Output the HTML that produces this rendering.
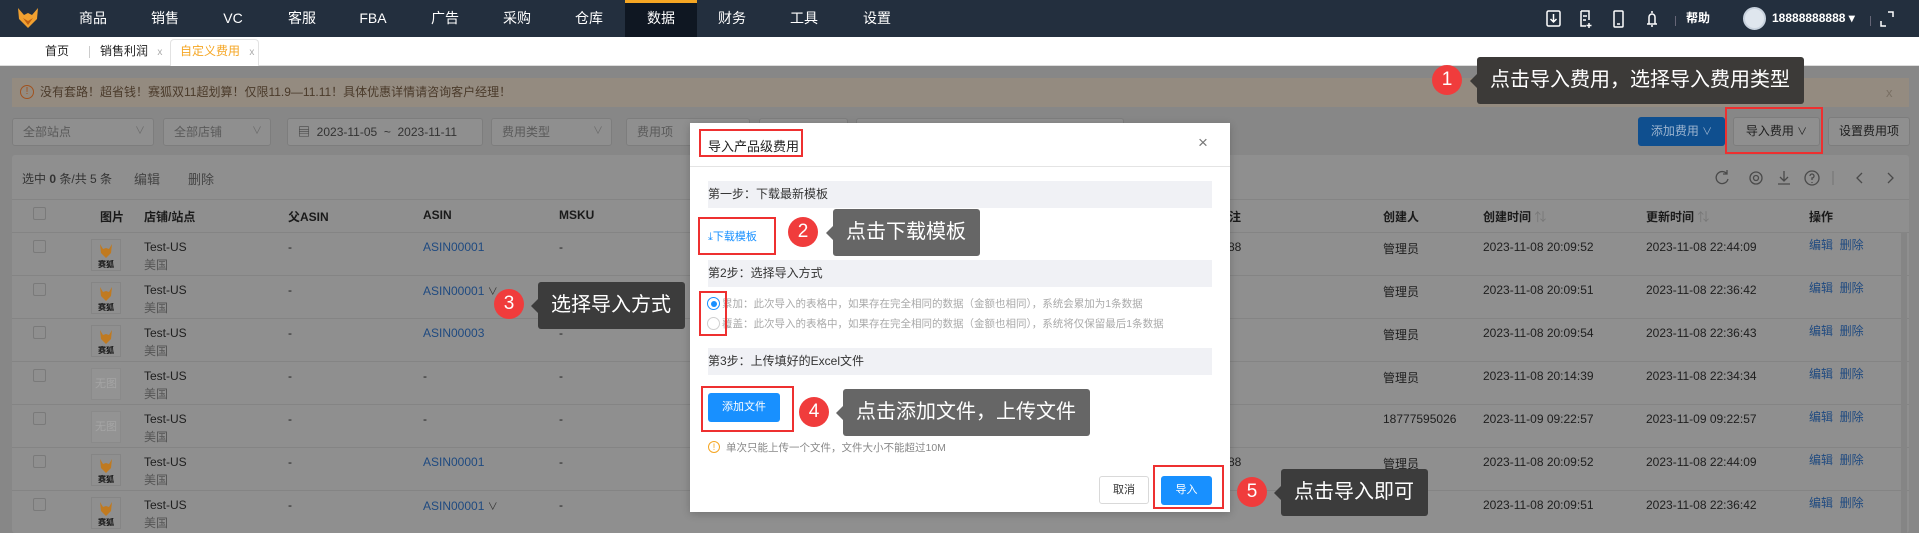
<!DOCTYPE html>
<html><head><meta charset="utf-8">
<style>
*{margin:0;padding:0;box-sizing:border-box}
body{width:1919px;height:533px;overflow:hidden;position:relative;background:#878787;font-family:"Liberation Sans","Noto Sans CJK SC",sans-serif;font-size:12px;color:#1e1e1e}
.a{position:absolute;white-space:nowrap}
.nav{left:0;top:0;width:1919px;height:37px;background:#232f3e}
.ni{top:0;height:37px;line-height:37px;color:#fff;font-size:14px;transform:translateX(-50%)}
.tabs{left:0;top:37px;width:1919px;height:29px;background:#fff;border-bottom:1px solid #ddd}
.inp{top:118px;height:28px;border:1px solid #7d7d7d;border-radius:3px;background:#8f8f8f;color:#5a5a5a;line-height:26px;padding-left:10px;font-size:12px}
.card{background:#8f8f8f}
.row{left:12px;width:1897px;height:43px;border-top:1px solid #848484}
.row .a{top:7px}
.row .l2{top:23px;color:#555}
.img{left:79px;top:6px!important;width:30px;height:32px;border:1px solid #858585;background:#8f8f8f}
.lk{color:#1f4a80}
.circ{width:30px;height:30px;border-radius:50%;background:#f03c3c;color:#fff;font-size:19px;text-align:center;line-height:30px}
.tip{height:47px;border-radius:3px;color:#fff;font-size:20px;line-height:47px;padding-left:13px}
.tip:before{content:"";position:absolute;left:-7px;top:17px;border-style:solid;border-width:7px 7px 7px 0;border-color:transparent;border-right-color:inherit}
.rb{border:2px solid #ee3030}
.band{left:18px;width:504px;height:27px;background:#f0f1f5;line-height:27px;padding-left:0;font-size:12px;color:#333}
</style></head><body>

<div class="a nav"></div>
<svg class="a" style="left:17px;top:7px" width="22" height="22" viewBox="0 0 22 22"><path d="M1 1 L7 8 L11 6 L15 8 L21 1 L20 12 L11 21 L2 12Z" fill="#f0a030"/><path d="M6 11 L11 18 L16 11 L11 14Z" fill="#c06010"/></svg>
<div class="a" style="left:625px;top:0;width:72px;height:37px;background:#0f1722;border-top:3px solid #f5a623"></div>
<div class="a ni" style="left:93px">商品</div>
<div class="a ni" style="left:165px">销售</div>
<div class="a ni" style="left:233px">VC</div>
<div class="a ni" style="left:302px">客服</div>
<div class="a ni" style="left:373px">FBA</div>
<div class="a ni" style="left:445px">广告</div>
<div class="a ni" style="left:517px">采购</div>
<div class="a ni" style="left:589px">仓库</div>
<div class="a ni" style="left:661px">数据</div>
<div class="a ni" style="left:732px">财务</div>
<div class="a ni" style="left:804px">工具</div>
<div class="a ni" style="left:877px">设置</div>
<svg class="a" style="left:1545px;top:9px" width="120" height="20" viewBox="0 0 120 20" fill="none" stroke="#fff" stroke-width="1.5"><rect x="2" y="2" width="13" height="15" rx="1.5"/><path d="M8.5 5v8M5.5 10l3 3 3-3"/><path d="M36 2h8v9M36 2v15h5M38 7h4M38 11h3M44 14v5M41.5 16.5h5"/><rect x="69" y="2" width="9" height="16" rx="1"/><path d="M72 15h3"/><path d="M102 15h10M104 15V8a3 3 0 0 1 6 0v7M107 2v2M106 17h2"/></svg>
<div class="a" style="left:1675px;top:16px;width:1px;height:10px;background:#667"></div>
<div class="a" style="left:1686px;top:0;line-height:37px;color:#fff;font-size:12px;font-weight:bold">帮助</div>
<div class="a" style="left:1743px;top:7px;width:23px;height:23px;border-radius:50%;background:#dfe6ee;border:2px solid #c8d2de"></div>
<div class="a" style="left:1772px;top:0;line-height:37px;color:#fff;font-size:12px;font-weight:bold">18888888888 ▾</div>
<div class="a" style="left:1870px;top:16px;width:1px;height:10px;background:#667"></div>
<svg class="a" style="left:1880px;top:11px" width="14" height="16" viewBox="0 0 14 16" fill="none" stroke="#fff" stroke-width="1.5"><path d="M8 1h5v5M1 10v5h5"/></svg>

<div class="a tabs"></div>
<div class="a" style="left:45px;top:37px;line-height:29px;font-size:12px;color:#222">首页</div>
<div class="a" style="left:89px;top:46px;width:1px;height:12px;background:#ccc"></div>
<div class="a" style="left:100px;top:37px;line-height:29px;font-size:12px;color:#222">销售利润 <span style="color:#aaa;font-size:10px;margin-left:6px">x</span></div>
<div class="a" style="left:170px;top:39px;width:89px;height:27px;border:1px solid #e2e2e2;border-bottom:none;border-radius:4px 4px 0 0;background:#fff"></div>
<div class="a" style="left:180px;top:37px;line-height:29px;font-size:12px;color:#f5a623">自定义费用 <span style="color:#aaa;font-size:10px;margin-left:6px">x</span></div>

<div class="a" style="left:12px;top:78px;width:1897px;height:29px;background:#948b80"></div>
<div class="a" style="left:20px;top:85px;width:14px;height:14px;border:1px solid #a0521f;border-radius:50%;color:#a0521f;font-size:10px;line-height:12px;text-align:center">!</div>
<div class="a" style="left:40px;top:78px;line-height:29px;color:#4a3a2a;font-size:12px">没有套路！超省钱！赛狐双11超划算！仅限11.9—11.11！具体优惠详情请咨询客户经理！</div>
<div class="a" style="left:1886px;top:78px;line-height:29px;color:#7a7064;font-size:13px">x</div>

<div class="a inp" style="left:12px;width:142px">全部站点<span style="position:absolute;right:8px;color:#6a6a6a;font-size:10px">∨</span></div>
<div class="a inp" style="left:163px;width:108px">全部店铺<span style="position:absolute;right:8px;color:#6a6a6a;font-size:10px">∨</span></div>
<div class="a inp" style="left:287px;width:196px;color:#333">▤ &nbsp;2023-11-05 &nbsp;~ &nbsp;2023-11-11</div>
<div class="a inp" style="left:491px;width:121px">费用类型<span style="position:absolute;right:8px;color:#6a6a6a;font-size:10px">∨</span></div>
<div class="a inp" style="left:626px;width:124px">费用项</div>
<div class="a inp" style="left:759px;width:89px"></div>
<div class="a inp" style="left:856px;width:268px"></div>
<div class="a" style="left:1638px;top:117px;width:87px;height:29px;background:#0f4f8f;border-radius:3px;color:#9db5d0;line-height:29px;text-align:center;font-size:12px">添加费用 <span style="font-size:10px">∨</span></div>
<div class="a" style="left:1733px;top:117px;width:87px;height:29px;background:#8f8f8f;border:1px solid #7d7d7d;border-radius:3px;color:#1e1e1e;line-height:27px;text-align:center;font-size:12px">导入费用 <span style="font-size:10px">∨</span></div>
<div class="a" style="left:1828px;top:117px;width:82px;height:29px;background:#8f8f8f;border:1px solid #7d7d7d;border-radius:3px;color:#1e1e1e;line-height:27px;text-align:center;font-size:12px">设置费用项</div>

<div class="a card" style="left:12px;top:155px;width:1897px;height:378px;border-radius:3px"></div>
<div class="a" style="left:22px;top:170px;font-size:12px;color:#333">选中 <b>0</b> 条/共 5 条</div>
<div class="a" style="left:134px;top:169px;font-size:13px;color:#444">编辑</div>
<div class="a" style="left:188px;top:169px;font-size:13px;color:#444">删除</div>
<svg class="a" style="left:1713px;top:168px" width="190" height="20" viewBox="0 0 190 20" fill="none" stroke="#4a4a4a" stroke-width="1.3"><path d="M14 6a6 6 0 1 0 1 5M14 2v4h-4"/><circle cx="43" cy="10" r="6"/><circle cx="43" cy="10" r="2.5"/><path d="M71 3v10M67 9l4 4 4-4M65 16h12"/><circle cx="99" cy="10" r="7"/><path d="M97 8a2 2 0 1 1 2 2v2M99 14v1"/><path d="M120 3v14" stroke="#7a7a7a"/><path d="M149 5l-5 5 5 5M175 5l5 5-5 5"/></svg>
<div class="a" style="left:12px;top:199px;width:1897px;height:1px;background:#848484"></div>

<div class="a" style="left:33px;top:207px;width:13px;height:13px;border:1px solid #7a7a7a;border-radius:2px"></div>
<div class="a" style="left:100px;top:208px;font-weight:bold;color:#1a1a1a">图片</div>
<div class="a" style="left:144px;top:208px;font-weight:bold;color:#1a1a1a">店铺/站点</div>
<div class="a" style="left:288px;top:208px;font-weight:bold;color:#1a1a1a">父ASIN</div>
<div class="a" style="left:423px;top:208px;font-weight:bold;color:#1a1a1a">ASIN</div>
<div class="a" style="left:559px;top:208px;font-weight:bold;color:#1a1a1a">MSKU</div>
<div class="a" style="left:1229px;top:208px;font-weight:bold;color:#1a1a1a">注</div>
<div class="a" style="left:1383px;top:208px;font-weight:bold;color:#1a1a1a">创建人</div>
<div class="a" style="left:1483px;top:208px;font-weight:bold;color:#1a1a1a">创建时间 <span style="color:#777;font-weight:normal">⇅</span></div>
<div class="a" style="left:1646px;top:208px;font-weight:bold;color:#1a1a1a">更新时间 <span style="color:#777;font-weight:normal">⇅</span></div>
<div class="a" style="left:1809px;top:208px;font-weight:bold;color:#1a1a1a">操作</div>

<div class="a row" style="top:232px"><div class="a" style="left:21px;width:13px;height:13px;border:1px solid #7a7a7a;border-radius:2px"></div><div class="a img"><svg width="28" height="30" viewBox="0 0 28 30"><path d="M8 4l3 5 3-1 3 1 3-5-1 9-5 5-5-5z" fill="#c07a20"/><text x="14" y="27" font-size="8" text-anchor="middle" fill="#111" font-weight="bold">赛狐</text></svg></div><div class="a" style="left:132px">Test-US</div><div class="a l2" style="left:132px">美国</div><div class="a" style="left:276px">-</div><div class="a lk" style="left:411px">ASIN00001</div><div class="a" style="left:547px">-</div><div class="a" style="left:1216px">88</div><div class="a" style="left:1371px">管理员</div><div class="a" style="left:1471px">2023-11-08 20:09:52</div><div class="a" style="left:1634px">2023-11-08 22:44:09</div><div class="a lk" style="left:1797px;top:3px">编辑 &nbsp;删除</div></div>
<div class="a row" style="top:275px"><div class="a" style="left:21px;width:13px;height:13px;border:1px solid #7a7a7a;border-radius:2px"></div><div class="a img"><svg width="28" height="30" viewBox="0 0 28 30"><path d="M8 4l3 5 3-1 3 1 3-5-1 9-5 5-5-5z" fill="#c07a20"/><text x="14" y="27" font-size="8" text-anchor="middle" fill="#111" font-weight="bold">赛狐</text></svg></div><div class="a" style="left:132px">Test-US</div><div class="a l2" style="left:132px">美国</div><div class="a" style="left:276px">-</div><div class="a lk" style="left:411px">ASIN00001 <span style="color:#333;font-size:10px">∨</span></div><div class="a" style="left:547px">-</div><div class="a" style="left:1371px">管理员</div><div class="a" style="left:1471px">2023-11-08 20:09:51</div><div class="a" style="left:1634px">2023-11-08 22:36:42</div><div class="a lk" style="left:1797px;top:3px">编辑 &nbsp;删除</div></div>
<div class="a row" style="top:318px"><div class="a" style="left:21px;width:13px;height:13px;border:1px solid #7a7a7a;border-radius:2px"></div><div class="a img"><svg width="28" height="30" viewBox="0 0 28 30"><path d="M8 4l3 5 3-1 3 1 3-5-1 9-5 5-5-5z" fill="#c07a20"/><text x="14" y="27" font-size="8" text-anchor="middle" fill="#111" font-weight="bold">赛狐</text></svg></div><div class="a" style="left:132px">Test-US</div><div class="a l2" style="left:132px">美国</div><div class="a" style="left:276px">-</div><div class="a lk" style="left:411px">ASIN00003</div><div class="a" style="left:547px">-</div><div class="a" style="left:1371px">管理员</div><div class="a" style="left:1471px">2023-11-08 20:09:54</div><div class="a" style="left:1634px">2023-11-08 22:36:43</div><div class="a lk" style="left:1797px;top:3px">编辑 &nbsp;删除</div></div>
<div class="a row" style="top:361px"><div class="a" style="left:21px;width:13px;height:13px;border:1px solid #7a7a7a;border-radius:2px"></div><div class="a img" style="background:#939393;border-color:#8a8a8a;color:#a5a5a5;font-size:11px;line-height:30px;text-align:center">无图</div><div class="a" style="left:132px">Test-US</div><div class="a l2" style="left:132px">美国</div><div class="a" style="left:276px">-</div><div class="a" style="left:411px">-</div><div class="a" style="left:547px">-</div><div class="a" style="left:1371px">管理员</div><div class="a" style="left:1471px">2023-11-08 20:14:39</div><div class="a" style="left:1634px">2023-11-08 22:34:34</div><div class="a lk" style="left:1797px;top:3px">编辑 &nbsp;删除</div></div>
<div class="a row" style="top:404px"><div class="a" style="left:21px;width:13px;height:13px;border:1px solid #7a7a7a;border-radius:2px"></div><div class="a img" style="background:#939393;border-color:#8a8a8a;color:#a5a5a5;font-size:11px;line-height:30px;text-align:center">无图</div><div class="a" style="left:132px">Test-US</div><div class="a l2" style="left:132px">美国</div><div class="a" style="left:276px">-</div><div class="a" style="left:411px">-</div><div class="a" style="left:547px">-</div><div class="a" style="left:1371px">18777595026</div><div class="a" style="left:1471px">2023-11-09 09:22:57</div><div class="a" style="left:1634px">2023-11-09 09:22:57</div><div class="a lk" style="left:1797px;top:3px">编辑 &nbsp;删除</div></div>
<div class="a row" style="top:447px"><div class="a" style="left:21px;width:13px;height:13px;border:1px solid #7a7a7a;border-radius:2px"></div><div class="a img"><svg width="28" height="30" viewBox="0 0 28 30"><path d="M8 4l3 5 3-1 3 1 3-5-1 9-5 5-5-5z" fill="#c07a20"/><text x="14" y="27" font-size="8" text-anchor="middle" fill="#111" font-weight="bold">赛狐</text></svg></div><div class="a" style="left:132px">Test-US</div><div class="a l2" style="left:132px">美国</div><div class="a" style="left:276px">-</div><div class="a lk" style="left:411px">ASIN00001</div><div class="a" style="left:547px">-</div><div class="a" style="left:1216px">88</div><div class="a" style="left:1371px">管理员</div><div class="a" style="left:1471px">2023-11-08 20:09:52</div><div class="a" style="left:1634px">2023-11-08 22:44:09</div><div class="a lk" style="left:1797px;top:3px">编辑 &nbsp;删除</div></div>
<div class="a row" style="top:490px"><div class="a" style="left:21px;width:13px;height:13px;border:1px solid #7a7a7a;border-radius:2px"></div><div class="a img"><svg width="28" height="30" viewBox="0 0 28 30"><path d="M8 4l3 5 3-1 3 1 3-5-1 9-5 5-5-5z" fill="#c07a20"/><text x="14" y="27" font-size="8" text-anchor="middle" fill="#111" font-weight="bold">赛狐</text></svg></div><div class="a" style="left:132px">Test-US</div><div class="a l2" style="left:132px">美国</div><div class="a" style="left:276px">-</div><div class="a lk" style="left:411px">ASIN00001 <span style="color:#333;font-size:10px">∨</span></div><div class="a" style="left:547px">-</div><div class="a" style="left:1371px">管理员</div><div class="a" style="left:1471px">2023-11-08 20:09:51</div><div class="a" style="left:1634px">2023-11-08 22:36:42</div><div class="a lk" style="left:1797px;top:3px">编辑 &nbsp;删除</div></div>
<div class="a" style="left:1901px;top:232px;width:6px;height:301px;background:#858585"></div>

<div class="a" style="left:690px;top:123px;width:540px;height:389px;background:#fff;box-shadow:0 2px 8px rgba(0,0,0,.2)">
  <div class="a" style="left:18px;top:13px;font-size:13px;color:#222">导入产品级费用</div>
  <div class="a" style="left:508px;top:10px;font-size:17px;color:#777">×</div>
  <div class="a" style="left:0;top:43px;width:540px;height:1px;background:#e4e4e4"></div>
  <div class="a band" style="top:58px">第一步：下载最新模板</div>
  <div class="a" style="left:18px;top:105px;font-size:11px;color:#1890ff">⤓下载模板</div>
  <div class="a band" style="top:137px">第2步：选择导入方式</div>
  <div class="a" style="left:17px;top:174px;width:13px;height:13px;border:1px solid #1890ff;border-radius:50%"><div style="margin:2.5px;width:6px;height:6px;border-radius:50%;background:#1890ff"></div></div>
  <div class="a" style="left:17px;top:194px;width:13px;height:13px;border:1px solid #d0d0d0;border-radius:50%"></div>
  <div class="a" style="left:32px;top:173px;font-size:10.5px;color:#aaa">累加：此次导入的表格中，如果存在完全相同的数据（金额也相同），系统会累加为1条数据</div>
  <div class="a" style="left:32px;top:193px;font-size:10.5px;color:#aaa">覆盖：此次导入的表格中，如果存在完全相同的数据（金额也相同），系统将仅保留最后1条数据</div>
  <div class="a band" style="top:225px">第3步：上传填好的Excel文件</div>
  <div class="a" style="left:18px;top:270px;width:72px;height:29px;background:#1890ff;border-radius:3px;color:#fff;font-size:11px;line-height:29px;text-align:center">添加文件</div>
  <div class="a" style="left:18px;top:318px;width:12px;height:12px;border:1px solid #f5a623;border-radius:50%;color:#f5a623;font-size:9px;line-height:10px;text-align:center">!</div>
  <div class="a" style="left:36px;top:317px;font-size:10.5px;color:#888">单次只能上传一个文件，文件大小不能超过10M</div>
  <div class="a" style="left:409px;top:353px;width:50px;height:28px;border:1px solid #d9d9d9;border-radius:3px;font-size:11px;line-height:26px;text-align:center;color:#333">取消</div>
  <div class="a" style="left:471px;top:353px;width:51px;height:29px;background:#1890ff;border-radius:3px;font-size:11px;line-height:29px;text-align:center;color:#fff">导入</div>
</div>

<div class="a rb" style="left:699px;top:129px;width:104px;height:28px"></div>
<div class="a rb" style="left:698px;top:217px;width:78px;height:38px"></div>
<div class="a rb" style="left:699px;top:291px;width:28px;height:45px"></div>
<div class="a rb" style="left:701px;top:386px;width:93px;height:46px"></div>
<div class="a rb" style="left:1153px;top:465px;width:71px;height:44px"></div>
<div class="a rb" style="left:1725px;top:107px;width:98px;height:47px"></div>

<div class="a circ" style="left:1432px;top:65px">1</div>
<div class="a tip" style="left:1477px;top:57px;width:327px;background:#3c3a38;border-color:#3c3a38">点击导入费用，选择导入费用类型</div>
<div class="a circ" style="left:788px;top:217px">2</div>
<div class="a tip" style="left:833px;top:209px;width:147px;background:#666;border-color:#666">点击下载模板</div>
<div class="a circ" style="left:494px;top:289px">3</div>
<div class="a tip" style="left:538px;top:282px;width:147px;background:#3c3c3c;border-color:#3c3c3c">选择导入方式</div>
<div class="a circ" style="left:799px;top:397px">4</div>
<div class="a tip" style="left:843px;top:389px;width:247px;background:#666;border-color:#666">点击添加文件，上传文件</div>
<div class="a circ" style="left:1237px;top:477px">5</div>
<div class="a tip" style="left:1281px;top:469px;width:147px;background:#3c3c3c;border-color:#3c3c3c">点击导入即可</div>

</body></html>
